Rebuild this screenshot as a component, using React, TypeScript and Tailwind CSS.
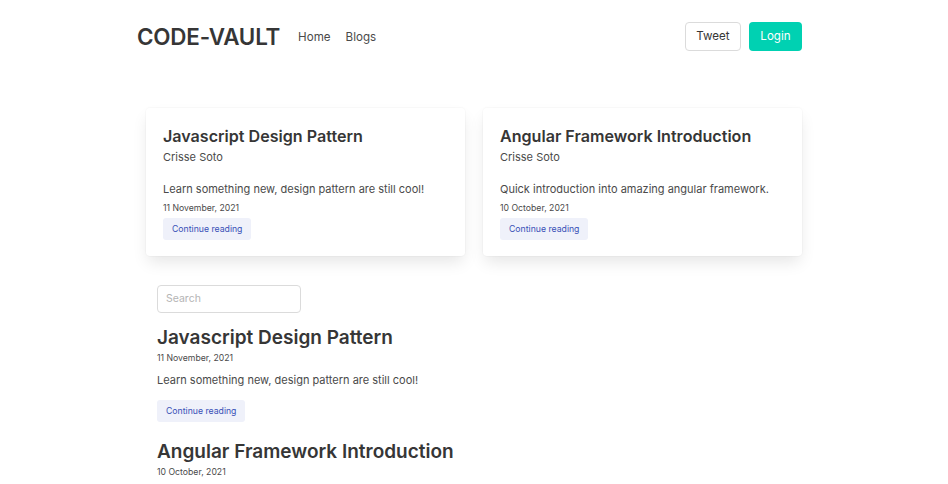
const posts = [
  {
    title: 'Javascript Design Pattern',
    author: 'Crisse Soto',
    description: 'Learn something new, design pattern are still cool!',
    date: '11 November, 2021',
  },
  {
    title: 'Angular Framework Introduction',
    author: 'Crisse Soto',
    description: 'Quick introduction into amazing angular framework.',
    date: '10 October, 2021',
  },
];

const ReadButton = () => (
  <button className="h-[22px] px-[9px] rounded-[3px] bg-[#eff1fa] text-[#3850b7] text-[8.7px] leading-none">
    Continue reading
  </button>
);

const App = () => {
  return (
    <div className="min-h-screen w-full bg-white text-[#4a4a4a] font-['Inter',sans-serif]">
      {/* Navbar */}
      <header className="ml-[137px] w-[665px] pt-[22px] flex items-center justify-between">
        <div className="flex items-center mt-[1px]">
          <h1 className="text-[22.4px] font-semibold text-[#363636] tracking-[-0.2px] leading-none">CODE-VAULT</h1>
          <nav className="flex items-center gap-[15px] ml-[18px] pt-[2px] text-[11.6px] text-[#4a4a4a]">
            <a>Home</a>
            <a>Blogs</a>
          </nav>
        </div>
        <div className="flex items-center gap-[8px]">
          <button className="h-[29px] w-[56px] rounded-[4px] border border-[#dbdbdb] bg-white text-[11.6px] text-[#363636]">
            Tweet
          </button>
          <button className="h-[29px] w-[53px] rounded-[4px] bg-[#00d1b2] text-[11.6px] text-white">
            Login
          </button>
        </div>
      </header>

      {/* Featured cards */}
      <section className="ml-[146px] w-[656px] mt-[57px] flex gap-[18px]">
        {posts.map((p) => (
          <article
            key={p.title}
            className="flex-1 h-[148px] rounded-[4px] bg-white px-[17px] pt-[16px] shadow-[0_8px_16px_-2px_rgba(10,10,10,0.1),0_0_0_1px_rgba(10,10,10,0.02)]"
          >
            <h2 className="text-[16.1px] font-semibold text-[#363636] leading-[24px]">{p.title}</h2>
            <p className="mt-[1px] text-[11px] leading-[16px]">{p.author}</p>
            <p className="mt-[16px] text-[11px] leading-[16px]">{p.description}</p>
            <p className="mt-[6px] text-[8.7px] leading-[10px] text-[#4a4a4a]">{p.date}</p>
            <div className="mt-[1px]">
              <ReadButton />
            </div>
          </article>
        ))}
      </section>

      {/* Post list */}
      <section className="ml-[157px] mt-[28px] w-[400px]">
        <input
          placeholder="Search"
          className="w-[144px] h-[28px] rounded-[4px] border border-[#dbdbdb] px-[8px] text-[10.5px] text-[#363636] placeholder:text-[#b5b5b5] outline-none"
        />
        {posts.map((p, i) => (
          <div key={p.title} className={i === 0 ? 'mt-[12px]' : 'mt-[17px]'}>
            <h3 className="text-[19px] font-semibold text-[#363636] leading-[26px]">{p.title}</h3>
            <p className="mt-[1px] text-[8.7px] leading-[12px]">{p.date}</p>
            {i === 0 && (
              <>
                <p className="mt-[8px] text-[11px] leading-[16px]">{p.description}</p>
                <div className="mt-[8px]">
                  <ReadButton />
                </div>
              </>
            )}
          </div>
        ))}
      </section>
    </div>
  );
};

export default App;
